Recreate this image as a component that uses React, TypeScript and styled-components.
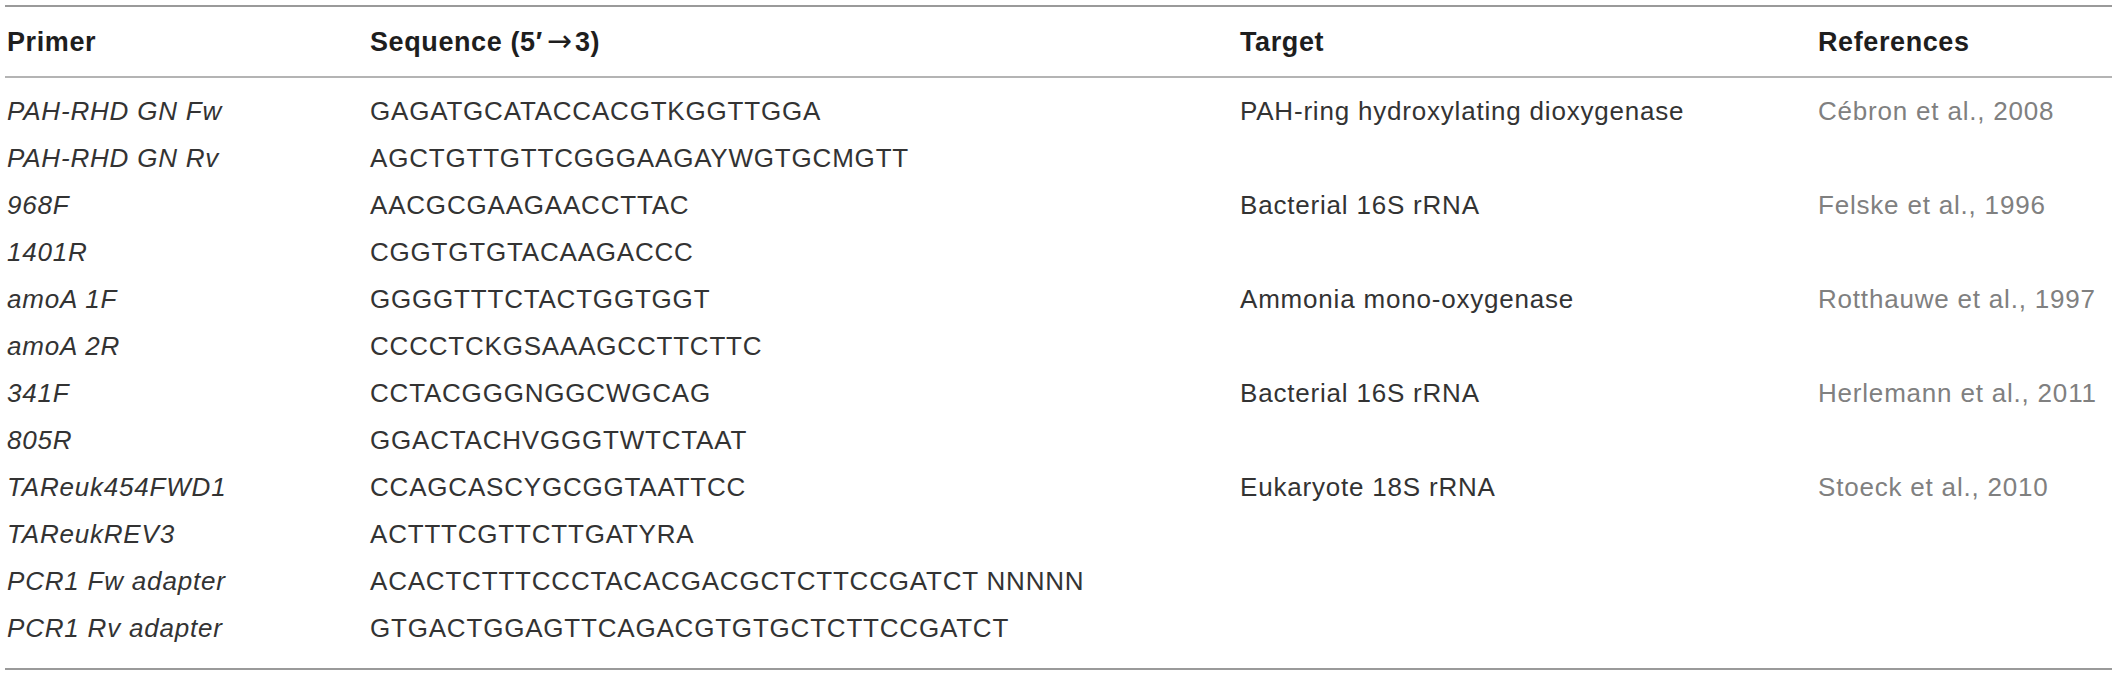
import React from "react";
import styled, { createGlobalStyle } from "styled-components";

const Global = createGlobalStyle`
  html, body { margin: 0; padding: 0; background: #ffffff; }
  body { font-family: "Liberation Sans", Arial, sans-serif; }
`;

const Page = styled.div`
  padding: 5px 6px 0 5px;
  width: 2107px;
`;

const Table = styled.div`
  border-top: 2px solid #9a9a9a;
  border-bottom: 2px solid #9a9a9a;
`;

const cols = "363px 870px 578px 1fr";

const HeadRow = styled.div`
  display: grid;
  grid-template-columns: ${cols};
  height: 47px;
  padding: 12px 0 10px;
  border-bottom: 2px solid #b4b4b4;
`;

const HeadCell = styled.div`
  padding-left: 2px;
  font-size: 27px;
  line-height: 47px;
  font-weight: 700;
  color: #1e1e1e;
  letter-spacing: 0.6px;
  white-space: nowrap;
`;

const Arrow = styled.span`
  font-family: "DejaVu Sans", sans-serif;
  font-weight: 400;
  font-size: 30px;
  line-height: 0;
  margin: 0 3px 0 4px;
  letter-spacing: 0;
`;

const Body = styled.div`
  padding: 10px 0 16px;
`;

const Row = styled.div`
  display: grid;
  grid-template-columns: ${cols};
  height: 47px;
`;

const Cell = styled.div<{ $italic?: boolean; $muted?: boolean }>`
  padding-left: 2px;
  font-size: 26px;
  line-height: 47px;
  letter-spacing: 0.8px;
  font-style: ${(p) => (p.$italic ? "italic" : "normal")};
  color: ${(p) => (p.$muted ? "#808080" : "#333333")};
  white-space: nowrap;
`;

type RowData = { primer: string; seq: string; target?: string; ref?: string };

const rows: RowData[] = [
  { primer: "PAH-RHD GN Fw", seq: "GAGATGCATACCACGTKGGTTGGA", target: "PAH-ring hydroxylating dioxygenase", ref: "Cébron et al., 2008" },
  { primer: "PAH-RHD GN Rv", seq: "AGCTGTTGTTCGGGAAGAYWGTGCMGTT" },
  { primer: "968F", seq: "AACGCGAAGAACCTTAC", target: "Bacterial 16S rRNA", ref: "Felske et al., 1996" },
  { primer: "1401R", seq: "CGGTGTGTACAAGACCC" },
  { primer: "amoA 1F", seq: "GGGGTTTCTACTGGTGGT", target: "Ammonia mono-oxygenase", ref: "Rotthauwe et al., 1997" },
  { primer: "amoA 2R", seq: "CCCCTCKGSAAAGCCTTCTTC" },
  { primer: "341F", seq: "CCTACGGGNGGCWGCAG", target: "Bacterial 16S rRNA", ref: "Herlemann et al., 2011" },
  { primer: "805R", seq: "GGACTACHVGGGTWTCTAAT" },
  { primer: "TAReuk454FWD1", seq: "CCAGCASCYGCGGTAATTCC", target: "Eukaryote 18S rRNA", ref: "Stoeck et al., 2010" },
  { primer: "TAReukREV3", seq: "ACTTTCGTTCTTGATYRA" },
  { primer: "PCR1 Fw adapter", seq: "ACACTCTTTCCCTACACGACGCTCTTCCGATCT NNNNN" },
  { primer: "PCR1 Rv adapter", seq: "GTGACTGGAGTTCAGACGTGTGCTCTTCCGATCT" },
];

export default function App() {
  return (
    <>
      <Global />
      <Page>
        <Table>
          <HeadRow>
            <HeadCell>Primer</HeadCell>
            <HeadCell>
              Sequence (5′<Arrow>→</Arrow>3)
            </HeadCell>
            <HeadCell>Target</HeadCell>
            <HeadCell>References</HeadCell>
          </HeadRow>
          <Body>
            {rows.map((r) => (
              <Row key={r.primer}>
                <Cell $italic>{r.primer}</Cell>
                <Cell>{r.seq}</Cell>
                <Cell>{r.target ?? ""}</Cell>
                <Cell $muted>{r.ref ?? ""}</Cell>
              </Row>
            ))}
          </Body>
        </Table>
      </Page>
    </>
  );
}
